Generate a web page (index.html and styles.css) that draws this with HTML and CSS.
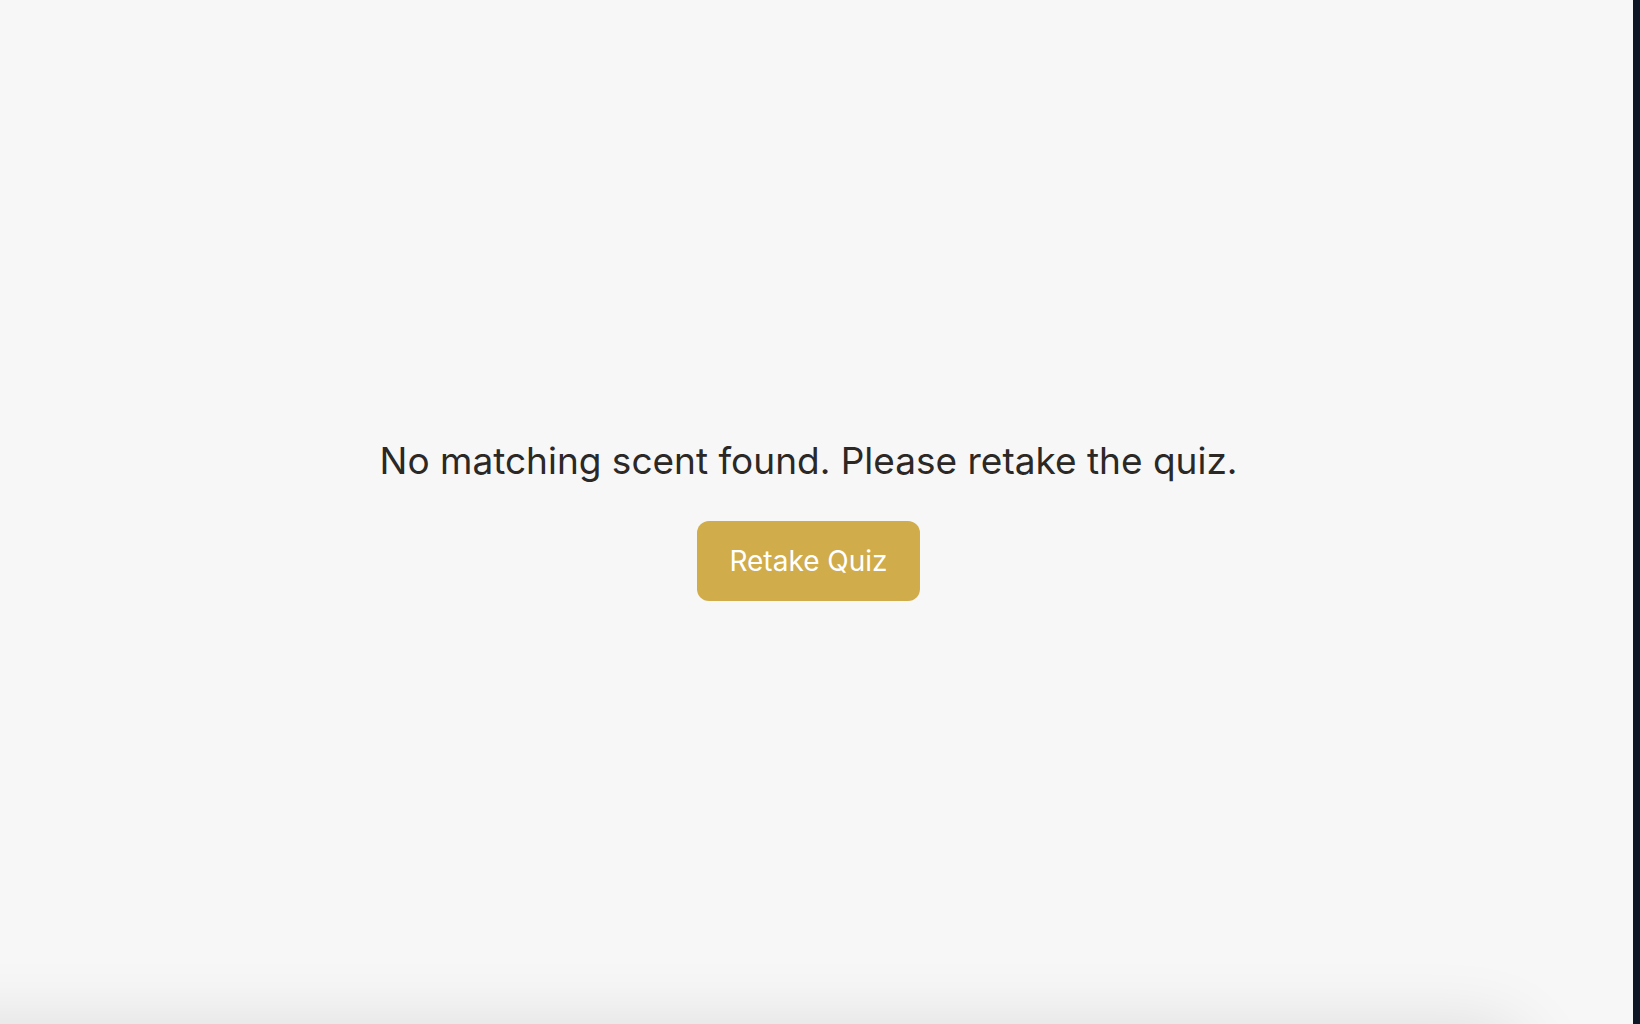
FILE: index.html
```html
<!DOCTYPE html>
<html lang="en">
<head>
<meta charset="utf-8">
<meta name="viewport" content="width=device-width, initial-scale=1">
<title>Scent Quiz</title>
<link rel="stylesheet" href="styles.css">
</head>
<body>
<main class="result">
  <p class="message">No matching scent found. Please retake the quiz.</p>
  <button class="retake" type="button">Retake Quiz</button>
</main>
</body>
</html>
```

FILE: styles.css
```css
* {
  box-sizing: border-box;
}

body {
  margin: 0;
  background: #f7f7f7;
  font-family: Inter, "Liberation Sans", sans-serif;
}

.result {
  position: relative;
  overflow: hidden;
  display: flex;
  flex-direction: column;
  align-items: center;
  justify-content: center;
  gap: 32px;
  min-height: 100vh;
  padding: 10px 16px 0 0;
  border-right: 7px solid #0e1525;
}

/* soft shade rising from the bottom edge */
.result::after {
  content: "";
  position: absolute;
  top: 100%;
  left: -120px;
  right: 108px;
  height: 160px;
  border-radius: 40px;
  box-shadow: 0 4px 72px rgba(0, 0, 0, 0.12);
  pointer-events: none;
}

.message {
  margin: 0;
  color: #2b2826;
  font-size: 37px;
  line-height: 56px;
  text-align: center;
}

.retake {
  height: 80px;
  padding: 0 32px;
  border: 0;
  border-radius: 12px;
  background: #d0ac4b;
  color: #fff;
  font-family: inherit;
  font-size: 28px;
  font-weight: 400;
  line-height: 40px;
  cursor: pointer;
}
```
